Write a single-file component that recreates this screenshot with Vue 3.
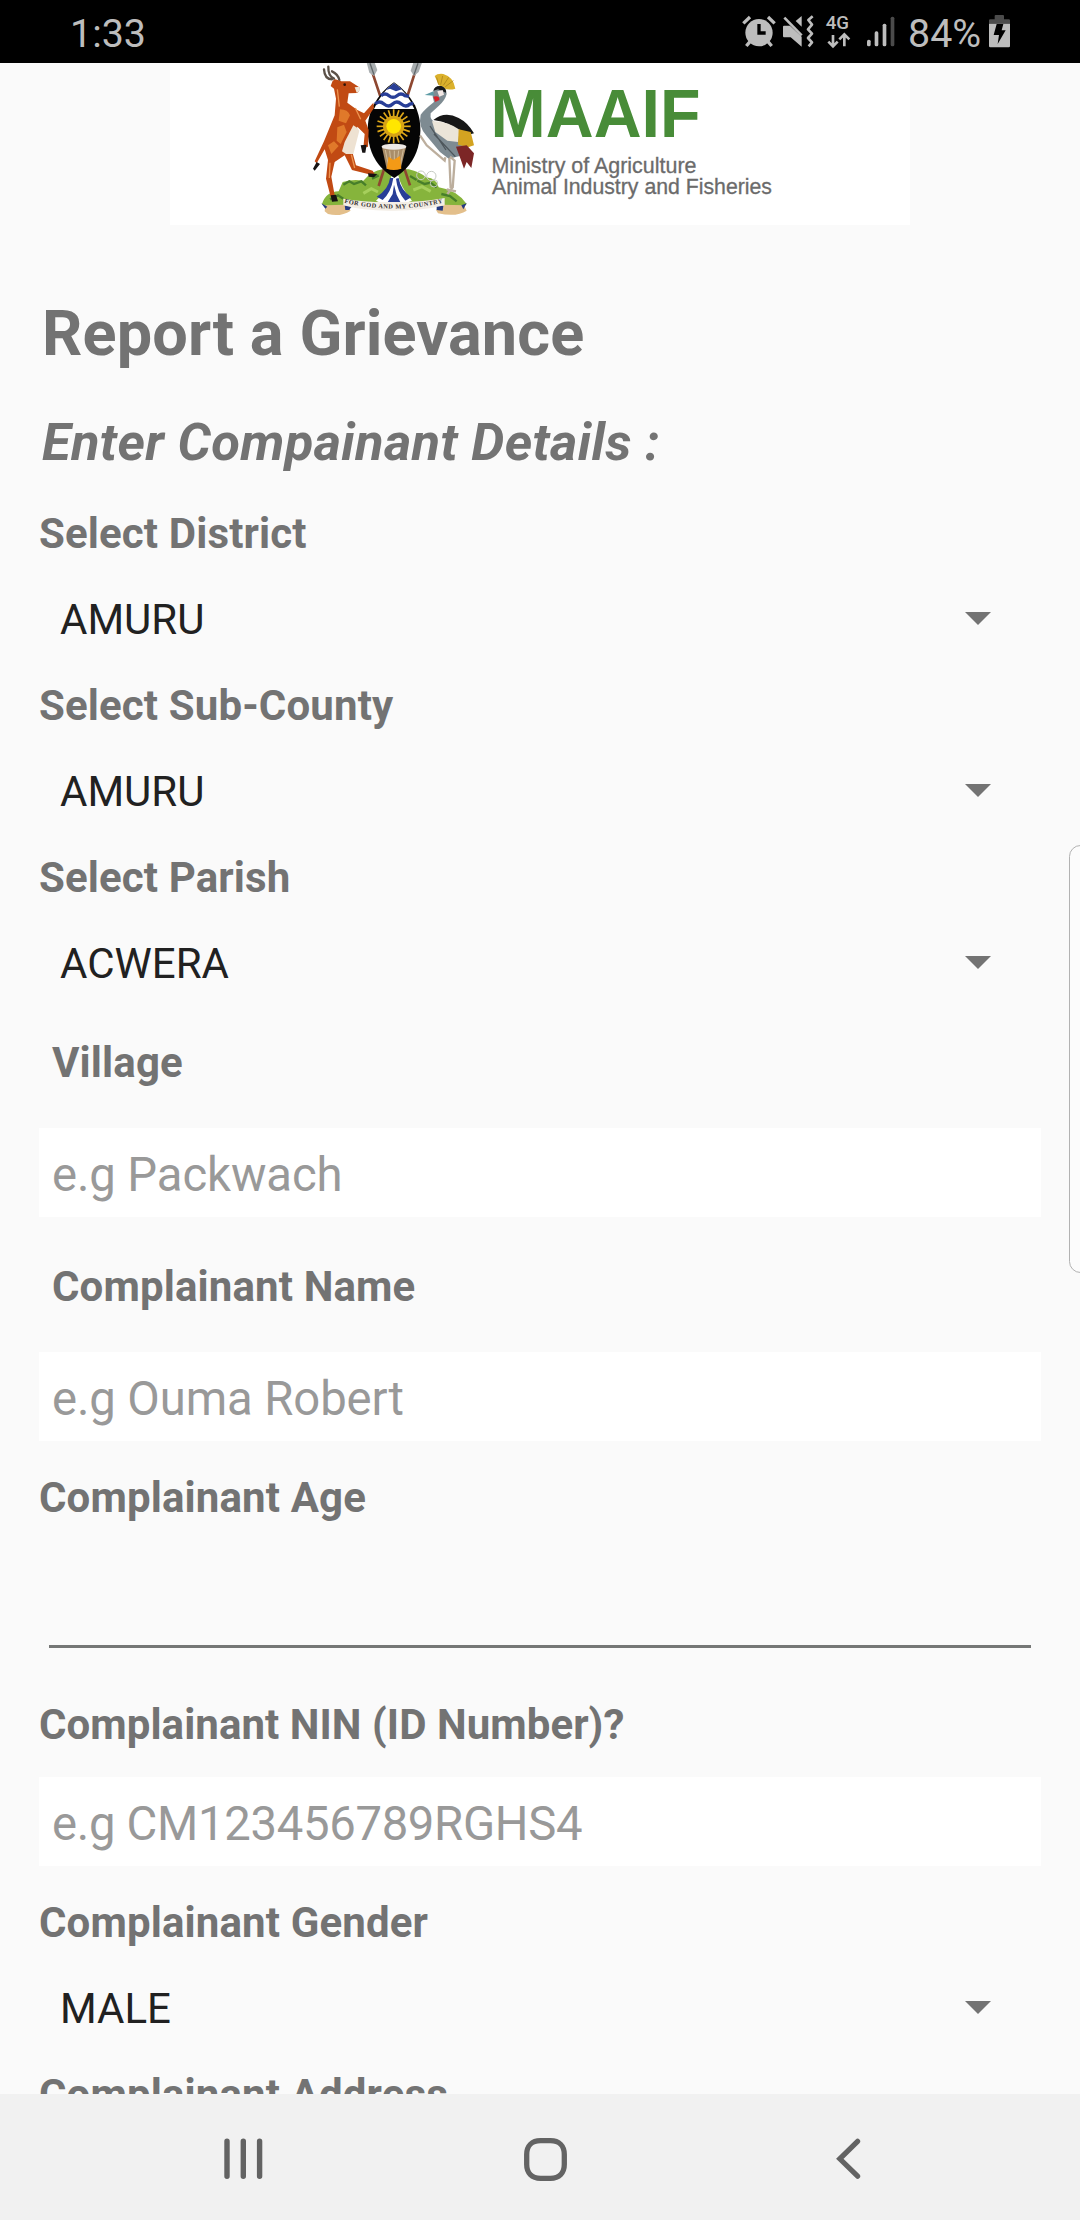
<script setup>
import { ref } from 'vue'

const village = ref('')
const name = ref('')
const nin = ref('')

const locations = [
  { label: 'Select District', value: 'AMURU' },
  { label: 'Select Sub-County', value: 'AMURU' },
  { label: 'Select Parish', value: 'ACWERA' },
]

const rays = Array.from({ length: 20 }, (_, i) => i * 18)
</script>

<template>
  <div class="screen">
    <header class="status">
      <span class="clock">1:33</span>
      <div class="status-icons">
        <svg class="tray" width="190" height="63" viewBox="0 0 570 189">
          <g fill="#bdbdbd" stroke="none">
            <circle cx="117" cy="98" r="41" />
            <g stroke="#bdbdbd" stroke-width="10" fill="none">
              <path d="M70 70L90 51M164 70L144 51M90 125L79 138M144 125L155 138" />
            </g>
            <path d="M117 72V99H137" fill="none" stroke="#000" stroke-width="10" />
            <path d="M189 80Q189 77 192 77H210L245 110V140L212 112H192Q189 112 189 108Z" />
            <path d="M245 48V80L227 63Z" />
            <path d="M193 53L245 106" fill="none" stroke="#bdbdbd" stroke-width="8" />
            <path d="M277 49L264 60L275 74L263 88L275 101L263 114L275 127L265 139" transform="translate(1 0)" fill="none" stroke="#bdbdbd" stroke-width="8" stroke-linejoin="round" />
            <text x="317" y="88" font-family="Roboto, sans-serif" font-size="54" font-weight="500" textLength="70" lengthAdjust="spacingAndGlyphs">4G</text>
            <path d="M339 105V139M325 125L339 139L353 125M373 139V104M358 118L373 103L388 118" fill="none" stroke="#bdbdbd" stroke-width="8" />
            <rect x="441" y="119" width="11" height="20" rx="5" />
            <rect x="464" y="94" width="11" height="45" rx="5" />
            <rect x="488" y="71" width="11" height="68" rx="5" />
            <rect x="512" y="50" width="11" height="89" rx="5" fill="#4b4b4b" />
          </g>
        </svg>
        <span class="percent">84%</span>
        <svg class="battery" width="21" height="33" viewBox="0 0 63 99">
          <path d="M0 26V16Q0 13 4 13H17V3Q17 0 20 0H42Q45 0 45 3V13H59Q63 13 63 16V26Z" fill="#4b4b4b" />
          <path d="M0 26H63V93Q63 97 59 97H4Q0 97 0 93Z" fill="#bdbdbd" />
          <path d="M23 27H43L38 46H50L26 87L30 60H14Z" fill="#000" />
        </svg>
      </div>
    </header>

    <main class="content">
      <svg class="logo" width="740" height="162" viewBox="0 0 740 162">
        <rect width="740" height="162" fill="#fff" />
        <g transform="translate(130 -13) scale(.33333)">
          <!-- hill -->
          <path d="M66 462Q78 425 116 424L128 396Q160 386 190 392Q216 362 248 358H326Q360 366 378 382Q412 386 416 412Q470 420 500 462L472 482Q284 440 96 482Z" fill="#86b43c" />
          <path d="M130 404l18-10 14 8 22-8 14 12M352 392l22 10 18-4 18 14M216 386l20-10M90 448l24-12 16 10M424 432l26 6 20 16M330 378l20 12" fill="none" stroke="#477e2a" stroke-width="7" />
          <path d="M190 430l24-14 20 10M340 420l26-10 26 14" fill="none" stroke="#a6cf5c" stroke-width="9" />
          <g fill="none" stroke="#c5c9c2" stroke-width="3"><circle cx="363" cy="376" r="13" /><circle cx="394" cy="378" r="14" /><circle cx="402" cy="400" r="11" /></g>
          <!-- river -->
          <path d="M276 372h18q6 38 42 80l-20 8H244l-16-8q42-36 48-80Z" fill="#fff" />
          <path d="M270 384q-4 34-40 56l18 10q26-24 32-66ZM296 384q6 36 38 58l-18 10q-24-26-28-66ZM282 404l8 30 12 24h-40l16-26Z" fill="#283e97" />
          <!-- spears -->
          <path d="M218 70L330 406M344 70L236 408" stroke="#8e4730" stroke-width="8" />
          <path d="M200 38H224L232 60L222 78L208 68ZM340 38H366L356 66L342 78L332 62Z" fill="#a9aeb0" />
          <path d="M210 40L222 74M354 40L342 74" stroke="#62686b" stroke-width="4" />
          <!-- shield -->
          <path d="M282 97Q320 122 345 166Q372 224 354 292Q338 350 283 384Q226 350 210 292Q192 224 220 166Q244 122 282 97Z" fill="#050505" />
          <path d="M282 99Q320 124 343 177H222Q246 124 282 99Z" fill="#fff" />
          <path d="M282 99L306 118L288 124L270 116L256 121Z" fill="#283e97" />
          <path d="M243 137q12-10 24 0t24 0 24 0l12 2M226 162q12-12 26 0t26 0 26 0 26 0l10-2" fill="none" stroke="#283e97" stroke-width="10" />
          <g stroke="#dfa819" stroke-width="5">
            <path v-for="r in rays" :key="r" d="M281 178V204" :transform="`rotate(${r} 281 229)`" />
          </g>
          <circle cx="281" cy="229" r="32" fill="#d6a315" />
          <circle cx="281" cy="229" r="22" fill="#ffe600" />
          <path d="M246 292H318L302 356H260Z" fill="#a98d69" />
          <path d="M256 300L266 350M269 302L274 350M283 302V350M296 302L290 350M310 298L300 350" stroke="#d1bd9c" stroke-width="3" />
          <path d="M260 356L266 320L280 330L300 318L304 356Q280 364 260 356Z" fill="#f49a16" />
          <ellipse cx="282" cy="290" rx="37" ry="9" fill="#eee9e5" />
          <!-- kob -->
          <path d="M96 88Q74 88 72 58M102 86Q84 78 85 50M118 90Q114 72 96 64" fill="none" stroke="#5b5148" stroke-width="7" stroke-linecap="round" />
          <path d="M98 92L106 88L124 94L150 94L178 112Q180 126 170 129L146 130L142 158L172 180L192 190L220 158L222 174L196 212L206 240L204 290L190 294L194 252L172 230L164 270L158 310L168 346L218 362L226 376L204 372L156 360L134 316L104 336L94 380L104 436L92 440L78 386L84 330L74 298L50 340L44 334L72 274L104 196L108 146L102 116L92 108Z" fill="#c14a13" />
          <path d="M120 178q24 0 30 18l-12 24-22-8ZM112 232l20-8 8 22-18 36-12-10ZM84 286l18-12 14 14-22 24Z" fill="#e0792a" />
          <path d="M160 226q12 6 18 16L160 312L138 312L126 304L134 276Z" fill="#eee2d2" />
          <path d="M112 118L118 170M166 174L182 208M154 314L164 354M90 338L88 384" fill="none" stroke="#ed9450" stroke-width="4" />
          <circle cx="134" cy="104" r="4" fill="#30150b" />
          <path d="M164 112l14-2 2 12-10 6Z" fill="#efe7d9" />
          <path d="M182 286L200 284L196 308L187 308ZM204 370L232 372L222 382L206 380ZM92 436L108 434L114 454L96 455ZM50 336L60 342L44 362L39 356Z" fill="#171313" />
          <!-- crane -->
          <path d="M404 78Q412 70 430 72Q460 80 466 116Q446 122 430 114Q420 110 416 104Z" fill="#dbb12c" />
          <path d="M416 104L410 82M422 104L428 78M430 106L446 82M436 110L460 92" stroke="#b58e1f" stroke-width="3" />
          <path d="M400 122Q404 106 424 108Q440 114 440 132Q436 150 416 168L392 190Q388 212 410 220L486 260L500 294L480 318L446 326L420 306L380 258Q354 230 362 194Q374 178 402 156L398 140Z" fill="#7e8b92" />
          <path d="M374 135L400 124L402 137Z" fill="#5d9ba5" />
          <path d="M400 122Q404 106 424 108Q440 114 438 128L414 118Z" fill="#17191b" />
          <path d="M412 124l16-4 4 14-14 6Z" fill="#f2e7e4" />
          <path d="M400 140Q420 136 418 150L406 156Z" fill="#d62028" />
          <path d="M400 210Q434 182 476 204Q504 218 522 250L492 258Q456 216 400 210Z" fill="#171717" />
          <path d="M396 214Q440 212 480 240L474 276L442 272L406 246Z" fill="#ebe5d8" />
          <path d="M476 238L512 246L522 286L504 292L474 284Z" fill="#d3a321" />
          <path d="M468 290L500 286L522 310L514 354L500 336L492 356L482 328Z" fill="#7c2626" />
          <path d="M390 228L438 300M402 252L466 320" stroke="#4d565b" stroke-width="4" />
          <path d="M360 256L380 286L434 332L436 322M450 320L464 332L458 414M448 324L452 414M440 418L468 424M458 412L442 432" fill="none" stroke="#bcae9d" stroke-width="7" />
          <!-- ribbon -->
          <path d="M76 466L136 464L152 482Q120 502 84 492L74 484ZM430 464L492 466L500 482Q470 502 414 490L408 480Z" fill="#e3bf8b" />
          <path d="M64 460L82 470L76 476ZM134 466L154 470L148 480L136 480ZM410 466L430 468L428 482L410 480ZM484 466L500 460L490 478Z" fill="#273a80" />
          <path d="M130 446Q200 458 282 456Q360 458 434 444L434 466Q370 482 282 482Q196 484 130 466Z" fill="#f3eee6" />
          <path id="motto-line" d="M133 458Q200 475 282 476Q366 474 434 457" fill="none" />
          <text font-family="Liberation Serif, serif" font-size="19" font-weight="700" fill="#34302e" textLength="298" lengthAdjust="spacing"><textPath href="#motto-line" textLength="298">FOR GOD AND MY COUNTRY</textPath></text>
        </g>
        <g font-family="Liberation Sans, Arial, sans-serif">
          <text x="320.5" y="73.5" font-size="69" font-weight="700" fill="#488c38" textLength="210" lengthAdjust="spacingAndGlyphs">MAAIF</text>
          <g font-size="21.5" fill="#6b6b6b" stroke="#6b6b6b" stroke-width=".3">
            <text x="321.5" y="109.5" textLength="205" lengthAdjust="spacingAndGlyphs">Ministry of Agriculture</text>
            <text x="322" y="131" textLength="280" lengthAdjust="spacingAndGlyphs">Animal Industry and Fisheries</text>
          </g>
        </g>
      </svg>

      <h1>Report a Grievance</h1>
      <h2>Enter Compainant Details :</h2>

      <template v-for="item in locations" :key="item.label">
        <div class="label">{{ item.label }}</div>
        <div class="select">
          <span>{{ item.value }}</span>
          <svg width="26" height="13" viewBox="0 0 26 13"><path d="M0 0H26L13 13Z" fill="#737373" /></svg>
        </div>
      </template>

      <label class="label inset village" for="village">Village</label>
      <input id="village" v-model="village" class="gap-inset" placeholder="e.g Packwach" />
      <label class="label inset person" for="name">Complainant Name</label>
      <input id="name" v-model="name" class="gap-inset" placeholder="e.g Ouma Robert" />
      <div class="label age">Complainant Age</div>
      <div class="underline"></div>
      <label class="label nin" for="nin">Complainant NIN (ID Number)?</label>
      <input id="nin" v-model="nin" class="gap id-number" placeholder="e.g CM123456789RGHS4" />
      <div class="label gender">Complainant Gender</div>
      <div class="select">
        <span>MALE</span>
        <svg width="26" height="13" viewBox="0 0 26 13"><path d="M0 0H26L13 13Z" fill="#737373" /></svg>
      </div>
      <div class="label">Complainant Address</div>
    </main>

    <div class="edge-handle"></div>

    <nav class="navbar">
      <svg width="39" height="42" viewBox="0 0 39 42"><path d="M3 3.2V38.3M19.3 3.2V38.3M35.6 3.2V38.3" fill="none" stroke="#636363" stroke-width="5.4" stroke-linecap="round" /></svg>
      <svg class="home" width="43" height="43" viewBox="0 0 43 43"><path d="M16.5 2.7H26.5C35 2.7 40.3 8 40.3 16.5V26.5C40.3 35 35 40.3 26.5 40.3H16.5C8 40.3 2.7 35 2.7 26.5V16.5C2.7 8 8 2.7 16.5 2.7Z" fill="none" stroke="#636363" stroke-width="5.3" /></svg>
      <svg width="25" height="42" viewBox="0 0 25 42"><path d="M21.6 3.3L3.8 20.8L21.6 38.2" fill="none" stroke="#636363" stroke-width="5.2" stroke-linecap="round" /></svg>
    </nav>
  </div>
</template>

<style>
body {
  margin: 0;
}
</style>

<style scoped>
.screen {
  position: relative;
  display: flex;
  flex-direction: column;
  width: 1080px;
  height: 2220px;
  overflow: hidden;
  background: #fafafa;
  color: #737373;
  font-family: Roboto, sans-serif;
}
.status {
  flex: none;
  display: flex;
  justify-content: space-between;
  height: 63px;
  background: #000;
  color: #bdbdbd;
  font-size: 39.4px;
  line-height: 67px;
}
.clock {
  margin-left: 70px;
}
.status-icons {
  display: flex;
  align-items: flex-start;
  margin-right: 70px;
}
.tray {
  margin-right: -2px;
}
.percent {
  width: 81px;
  white-space: nowrap;
}
.battery {
  margin-top: 15px;
}
.content {
  flex: none;
  display: flex;
  flex-direction: column;
  box-sizing: border-box;
  height: 2031px;
  padding: 0 39px;
  overflow: hidden;
}
.content > * {
  flex: none;
}
.logo {
  display: block;
  align-self: center;
}
h1,
h2 {
  margin: 0;
  padding-left: 3px;
  font-weight: 700;
}
h1 {
  margin-top: 72px;
  font-size: 63px;
  line-height: 73px;
  letter-spacing: 0.13px;
}
h2 {
  margin: 41px 0 36px;
  font-size: 52.5px;
  line-height: 62px;
  font-style: italic;
  letter-spacing: 0.34px;
}
.label {
  font-size: 42px;
  font-weight: 700;
  line-height: 49px;
  letter-spacing: 0.13px;
}
.nin {
  letter-spacing: 0.06px;
}
.inset {
  padding-left: 13px;
}
.select {
  display: flex;
  align-items: center;
  justify-content: space-between;
  height: 123px;
  padding: 0 50px 0 21px;
  color: #212121;
  font-size: 42px;
}
.select svg {
  margin-bottom: 2px;
}
input {
  box-sizing: border-box;
  width: 100%;
  height: 89px;
  padding: 19px 13px 14px;
  border: 0;
  border-radius: 0;
  outline: 0;
  background: #fff;
  color: #212121;
  font: 47.25px Roboto, sans-serif;
  letter-spacing: -0.1px;
}
.id-number {
  letter-spacing: -0.31px;
}
input::placeholder {
  color: #999;
  opacity: 1;
}
.village {
  margin-top: 13px;
}
.person {
  margin-top: 45px;
}
.gap-inset {
  margin-top: 41px;
}
.age {
  margin-top: 32px;
}
.underline {
  height: 2.6px;
  margin: 123px 10px 52.4px;
  background: #757776;
}
.gap {
  margin-top: 28px;
}
.gender {
  margin-top: 32px;
}
.edge-handle {
  position: absolute;
  top: 845px;
  right: -12px;
  box-sizing: border-box;
  width: 23px;
  height: 428px;
  border: 1.5px solid #b2b2b2;
  border-radius: 12px;
  background: #fcfcfc;
}
.navbar {
  flex: none;
  display: flex;
  align-items: center;
  justify-content: space-between;
  box-sizing: border-box;
  height: 126px;
  padding: 4px 219px 0 224px;
  background: #f1f1f1;
}
.home {
  margin-right: 8px;
}
</style>
